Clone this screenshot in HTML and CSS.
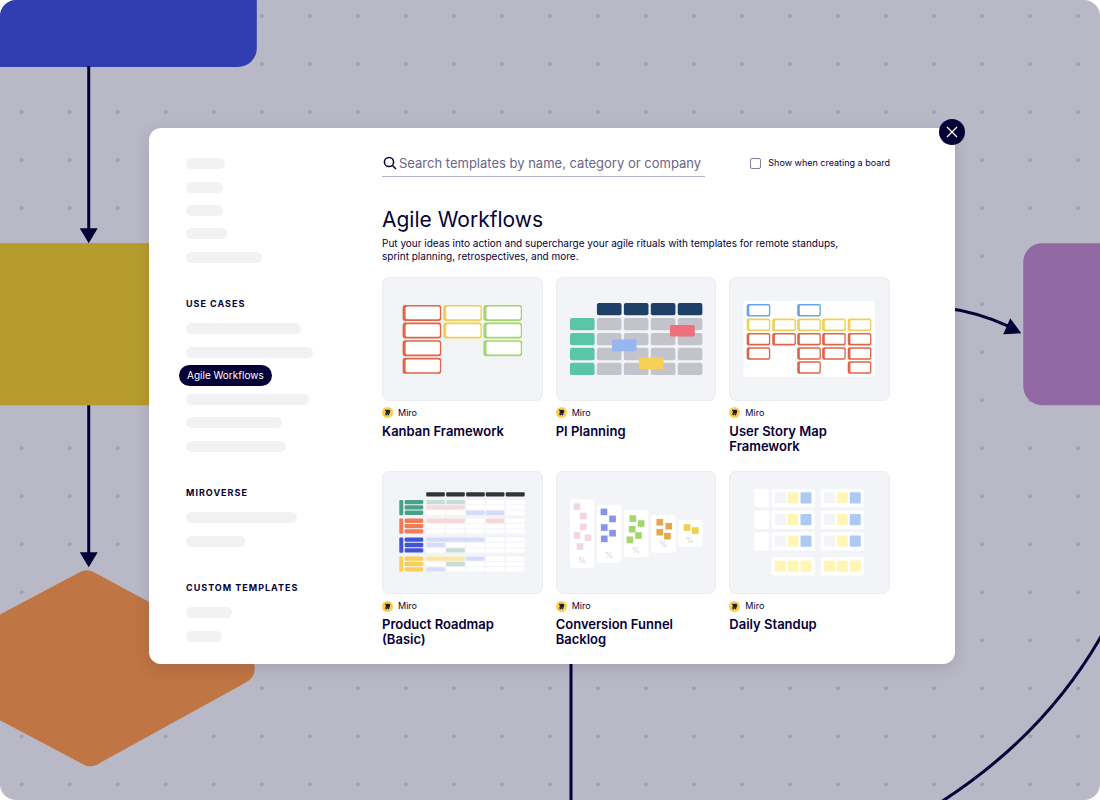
FILE: index.html
```html
<!DOCTYPE html>
<html lang="en">
<head>
<meta charset="utf-8">
<meta name="viewport" content="width=device-width, initial-scale=1">
<title>Template picker</title>
<link rel="stylesheet" href="styles.css">
</head>
<body>
<div class="board">
  <svg class="canvas" viewBox="0 0 1100 800" preserveAspectRatio="xMidYMid slice" aria-hidden="true">
    <defs>
      <pattern id="dots" x="-2" y="-8" width="48" height="48" patternUnits="userSpaceOnUse"><circle cx="24" cy="24" r="2" fill="#a09fae"/></pattern>
      <g id="sticky"><rect width="116" height="48" rx="8" fill="currentColor"/><rect x="9" y="5" width="103" height="38" rx="5" fill="#fff"/></g>
      <g id="story"><rect width="71" height="38" rx="6" fill="currentColor"/><rect x="8" y="5" width="59" height="28" rx="3" fill="#fff"/></g>
      <g id="cell-row"><rect width="56" height="13" rx="3"/><rect x="60" width="56" height="13" rx="3"/><rect x="120" width="56" height="13" rx="3"/><rect x="179" width="56" height="13" rx="3"/><rect x="239" width="57" height="13" rx="3"/></g>
      <g id="lane">
        <g fill="currentColor"><rect width="12" height="46" rx="3"/><rect x="16" width="56" height="13" rx="4"/><rect x="16" y="16" width="56" height="13" rx="4"/><rect x="16" y="32" width="56" height="13" rx="4"/></g>
        <g fill="#fff"><use href="#cell-row" x="81"/><use href="#cell-row" x="81" y="16"/><use href="#cell-row" x="81" y="32"/></g>
      </g>
      <g id="plan-row"><rect width="74" height="37" rx="6"/><rect x="81" width="74" height="37" rx="6"/><rect x="162" width="74" height="37" rx="6"/><rect x="243" width="74" height="37" rx="6"/></g>
      <rect id="note" width="20" height="20"/>
      <g id="day"><rect width="130" height="55" rx="4" fill="#fff"/><rect x="10" y="10" width="33" height="33" rx="3" fill="#f3f4f7"/><rect x="48" y="10" width="33" height="33" rx="3" fill="#fff6b5"/><rect x="87" y="10" width="33" height="34" rx="3" fill="#adcaf2"/></g>
      <g id="ideas"><rect width="130" height="55" rx="4" fill="#fff"/><g fill="#fff6b5"><rect x="10" y="10" width="33" height="34" rx="3"/><rect x="48" y="10" width="33" height="34" rx="3"/><rect x="87" y="10" width="33" height="34" rx="3"/></g></g>
      <symbol id="miro" viewBox="0 0 33 33"><circle cx="16.500" cy="16.500" r="16.500" fill="#fbd04b"/><path d="M8 8h4l2 3-1-3h4l2 3-1-3h4l3 4-4 13h-4l3-10-5 10h-4l3-9-5 9H8l4-11z" fill="#171334"/></symbol>
    </defs>
    <rect width="1100" height="800" fill="url(#dots)"/>
    <rect x="-40" y="-40" width="297" height="107" rx="19" fill="#313eb1"/>
    <rect x="-20" y="243" width="240" height="162" fill="#b69c2d"/>
    <rect x="1023" y="243" width="120" height="162" rx="19" fill="#9068a2"/>
    <path d="M-5 617 78 573Q87 567 96 573L243 652Q255 658 255 668 255 677 246 682L101 762Q91 769 82 763L-5 717Z" fill="#bf7544"/>
    <g fill="none" stroke="#050038" stroke-width="3">
      <path d="M89 66V230M89 405V555M571 640V800M940 802C1010 757 1065 700 1103 632M940 307C965 310 985 315 1008 326"/>
    </g>
    <path d="M80 228H98L89 243ZM80 552H98L89 567ZM1010 318 1021 333 1003 334Z" fill="#050038"/>
  </svg>

  <section class="dialog" role="dialog" aria-label="Templates">
    <button class="close" type="button" aria-label="Close"><svg viewBox="0 0 26 26" aria-hidden="true"><path d="M8 8 18 18M18 8 8 18"/></svg></button>

    <nav class="sidebar" aria-label="Template categories">
      <ul class="links links-5">
        <li><span class="bar w39"></span></li><li><span class="bar w37"></span></li><li><span class="bar w37"></span></li><li><span class="bar w41"></span></li><li><span class="bar w76"></span></li>
      </ul>
      <h2 class="group">USE CASES</h2>
      <ul class="links links-6">
        <li><span class="bar w115"></span></li><li><span class="bar w127"></span></li><li><a class="pill" href="#agile">Agile Workflows</a></li><li><span class="bar w123"></span></li><li><span class="bar w96"></span></li><li><span class="bar w100"></span></li>
      </ul>
      <h2 class="group">MIROVERSE</h2>
      <ul class="links links-2">
        <li><span class="bar w111"></span></li><li><span class="bar w59"></span></li>
      </ul>
      <h2 class="group">CUSTOM TEMPLATES</h2>
      <ul class="links links-2">
        <li><span class="bar w46"></span></li><li><span class="bar w36"></span></li>
      </ul>
    </nav>

    <main class="content" id="agile">
      <div class="tools">
        <label class="search">
          <svg viewBox="0 0 14 14" aria-hidden="true"><circle cx="6" cy="6" r="4.600"/><path d="m9.500 9.500 3.500 3.500"/></svg>
          <input type="text" aria-label="Search templates" placeholder="Search templates by name, category or company">
        </label>
        <label class="option"><input type="checkbox">Show when creating a board</label>
      </div>
      <h1 class="title">Agile Workflows</h1>
      <p class="intro">Put your ideas into action and supercharge your agile rituals with templates for remote standups, sprint planning, retrospectives, and more.</p>

      <div class="grid">
        <article class="card">
          <svg class="thumb" viewBox="21 21 483 372" aria-hidden="true">
            <g color="#e06446"><use href="#sticky" x="83" y="105"/><use href="#sticky" x="83" y="158"/><use href="#sticky" x="83" y="211"/><use href="#sticky" x="83" y="264"/></g>
            <g color="#f3ce58"><use href="#sticky" x="205" y="105"/><use href="#sticky" x="205" y="158"/></g>
            <g color="#a3d66c"><use href="#sticky" x="326" y="105"/><use href="#sticky" x="326" y="158"/><use href="#sticky" x="326" y="211"/></g>
          </svg>
          <p class="author"><svg aria-hidden="true"><use href="#miro"/></svg>Miro</p>
          <h3 class="name">Kanban Framework</h3>
        </article>
        <article class="card">
          <svg class="thumb" viewBox="18 21 483 372" aria-hidden="true">
            <use href="#plan-row" x="141" y="99" fill="#1e3f66"/>
            <g fill="#c3c3cc"><use href="#plan-row" x="141" y="144"/><use href="#plan-row" x="141" y="189"/><use href="#plan-row" x="141" y="234"/><use href="#plan-row" x="141" y="279"/></g>
            <g fill="#5bc5a7"><rect x="60" y="144" width="74" height="37" rx="6"/><rect x="60" y="189" width="74" height="37" rx="6"/><rect x="60" y="234" width="74" height="37" rx="6"/><rect x="60" y="279" width="74" height="37" rx="6"/></g>
            <rect x="361" y="165" width="74" height="35" rx="4" fill="#ee6e79"/><rect x="186" y="209" width="74" height="35" rx="4" fill="#97b5ee"/><rect x="267" y="263" width="74" height="35" rx="4" fill="#f9d057"/>
          </svg>
          <p class="author"><svg aria-hidden="true"><use href="#miro"/></svg>Miro</p>
          <h3 class="name">PI Planning</h3>
        </article>
        <article class="card">
          <svg class="thumb" viewBox="22 21 483 372" aria-hidden="true">
            <rect x="65" y="93" width="396" height="228" rx="6" fill="#fff"/>
            <g color="#66a5ea"><use href="#story" x="75" y="102"/><use href="#story" x="227" y="102"/></g>
            <g color="#f1cf58"><use href="#story" x="75" y="146"/><use href="#story" x="152" y="146"/><use href="#story" x="227" y="146"/><use href="#story" x="302" y="146"/><use href="#story" x="379" y="146"/></g>
            <g color="#e06446"><use href="#story" x="75" y="189"/><use href="#story" x="152" y="189"/><use href="#story" x="227" y="189"/><use href="#story" x="302" y="189"/><use href="#story" x="379" y="189"/><use href="#story" x="75" y="232"/><use href="#story" x="227" y="232"/><use href="#story" x="302" y="232"/><use href="#story" x="379" y="232"/><use href="#story" x="227" y="274"/><use href="#story" x="379" y="274"/></g>
          </svg>
          <p class="author"><svg aria-hidden="true"><use href="#miro"/></svg>Miro</p>
          <h3 class="name">User Story Map Framework</h3>
        </article>
        <article class="card">
          <svg class="thumb" viewBox="21 24 483 372" aria-hidden="true">
            <use href="#cell-row" x="154" y="88" fill="#333336"/>
            <use href="#lane" x="73" y="111" color="#49a187"/><use href="#lane" x="73" y="167" color="#ef7b59"/><use href="#lane" x="73" y="224" color="#4353d5"/><use href="#lane" x="73" y="281" color="#f9d057"/>
            <g fill="#c9ddd7"><rect x="154" y="111" width="56" height="13" rx="3"/><rect x="214" y="111" width="56" height="13" rx="3"/><rect x="214" y="256" width="56" height="13" rx="3"/><rect x="214" y="297" width="56" height="13" rx="3"/></g>
            <g fill="#f4d8da"><rect x="154" y="127" width="116" height="13" rx="3"/><rect x="154" y="167" width="116" height="13" rx="3"/><rect x="333" y="167" width="56" height="13" rx="3"/></g>
            <g fill="#d5dbfa"><rect x="274" y="143" width="56" height="13" rx="3"/><rect x="333" y="143" width="56" height="13" rx="3"/><rect x="154" y="224" width="176" height="13" rx="3"/><rect x="154" y="240" width="56" height="13" rx="3"/><rect x="274" y="281" width="56" height="13" rx="3"/><rect x="154" y="313" width="56" height="13" rx="3"/></g>
            <rect x="154" y="281" width="116" height="13" rx="3" fill="#f8e6a4"/>
          </svg>
          <p class="author"><svg aria-hidden="true"><use href="#miro"/></svg>Miro</p>
          <h3 class="name">Product Roadmap (Basic)</h3>
        </article>
        <article class="card">
          <svg class="thumb" viewBox="18 24 483 372" aria-hidden="true">
            <g fill="#fff"><rect x="60" y="110" width="73" height="205" rx="9"/><rect x="141" y="126" width="74" height="174" rx="9"/><rect x="222" y="141" width="74" height="142" rx="9"/><rect x="304" y="156" width="74" height="114" rx="9"/><rect x="384" y="171" width="75" height="81" rx="9"/></g>
            <g fill="#f3d6df"><use href="#note" x="71" y="121"/><use href="#note" x="90" y="149"/><use href="#note" x="90" y="182"/><use href="#note" x="71" y="208"/><use href="#note" x="104" y="215"/><use href="#note" x="80" y="241"/></g>
            <g fill="#8694ee"><use href="#note" x="152" y="137"/><use href="#note" x="178" y="158"/><use href="#note" x="153" y="184"/><use href="#note" x="178" y="201"/><use href="#note" x="153" y="218"/></g>
            <g fill="#a3d66c"><use href="#note" x="239" y="157"/><use href="#note" x="264" y="172"/><use href="#note" x="237" y="189"/><use href="#note" x="256" y="208"/><use href="#note" x="230" y="221"/></g>
            <g fill="#e6a84a"><use href="#note" x="320" y="168"/><use href="#note" x="347" y="180"/><use href="#note" x="320" y="198"/><use href="#note" x="343" y="210"/></g>
            <g fill="#f0d14d"><use href="#note" x="402" y="184"/><use href="#note" x="427" y="193"/></g>
            <g class="percent"><text x="96" y="300">%</text><text x="178" y="286">%</text><text x="258" y="270">%</text><text x="340" y="253">%</text><text x="420" y="239">%</text></g>
          </svg>
          <p class="author"><svg aria-hidden="true"><use href="#miro"/></svg>Miro</p>
          <h3 class="name">Conversion Funnel Backlog</h3>
        </article>
        <article class="card">
          <svg class="thumb" viewBox="22 24 483 372" aria-hidden="true">
            <g fill="#fff"><rect x="98" y="78" width="44" height="55" rx="4"/><rect x="98" y="143" width="44" height="55" rx="4"/><rect x="98" y="208" width="44" height="55" rx="4"/></g>
            <use href="#day" x="150" y="78"/><use href="#day" x="298" y="78"/><use href="#day" x="150" y="143"/><use href="#day" x="298" y="143"/><use href="#day" x="150" y="208"/><use href="#day" x="298" y="208"/>
            <use href="#ideas" x="150" y="283"/><use href="#ideas" x="298" y="283"/>
          </svg>
          <p class="author"><svg aria-hidden="true"><use href="#miro"/></svg>Miro</p>
          <h3 class="name">Daily Standup</h3>
        </article>
      </div>
    </main>
  </section>
</div>
</body>
</html>
```

FILE: styles.css
```css
* { box-sizing: border-box; }
body { margin: 0; background: #fff; color: #050038; font-family: Inter, "Liberation Sans", sans-serif; }
h1, h2, h3, p, ul { margin: 0; padding: 0; }
ul { list-style: none; }

.board { position: relative; min-height: 100vh; padding: 128px 145px 136px 149px; border-radius: 16px; background: #b9b8c6; overflow: hidden; }
.canvas { position: absolute; inset: 0; width: 100%; height: 100%; }

.dialog { position: relative; display: flex; border-radius: 12px; background: #fff; box-shadow: 0 4px 16px rgba(5, 0, 56, .12); }
.close { position: absolute; top: -9px; right: -10px; width: 26px; height: 26px; padding: 0; border: 0; border-radius: 50%; background: #050038; cursor: pointer; }
.close svg { display: block; fill: none; stroke: #fff; stroke-width: 1.3; }

.sidebar { flex: 0 0 233px; padding: 24px 20px 14px 37px; }
.links { display: flex; flex-direction: column; }
.links li { flex: 1; display: flex; align-items: center; }
.links-5 { height: 117px; }
.links-6 { height: 141px; }
.links-2 { height: 47px; }
.group { margin: 29px 0 7px; font-size: 9px; line-height: 12px; font-weight: 700; letter-spacing: 1px; }
.bar { height: 11px; border-radius: 6px; background: #f2f2f5; }
.w36 { width: 36px; } .w37 { width: 37px; } .w39 { width: 39px; } .w41 { width: 41px; } .w46 { width: 46px; }
.w59 { width: 59px; } .w76 { width: 76px; } .w96 { width: 96px; } .w100 { width: 100px; } .w111 { width: 111px; }
.w115 { width: 115px; } .w123 { width: 123px; } .w127 { width: 127px; }
.pill { margin-left: -7px; padding: 0 8px; border-radius: 11px; background: #050038; color: #fff; font-size: 10px; line-height: 21px; text-decoration: none; white-space: nowrap; }

.content { flex: 1; min-width: 0; padding: 21px 65px 17px 0; }
.tools { display: flex; align-items: center; justify-content: space-between; gap: 20px; }
.search { display: flex; flex: 0 1 323px; align-items: center; gap: 2px; height: 28px; border-bottom: 1px solid #b4b2c5; }
.search svg { flex: none; width: 14px; height: 14px; margin-left: 1px; fill: none; stroke: #050038; stroke-width: 1.5; }
.search input { flex: 1; min-width: 0; padding: 0; border: 0; outline: 0; background: none; color: #050038; font: 13px/20px Inter, sans-serif; }
.search input::placeholder { color: #69668a; opacity: 1; }
.option { display: flex; align-items: center; gap: 7px; font-size: 9px; line-height: 12px; white-space: nowrap; }
.option input { appearance: none; width: 11px; height: 11px; margin: 0; border: 1px solid #8280a0; border-radius: 2px; }
.option input:checked { background: #050038; }
.title { margin-top: 29px; font-size: 21px; line-height: 28px; font-weight: 400; }
.intro { margin-top: 3px; padding-right: 24px; font-size: 10px; line-height: 13px; }

.grid { display: grid; grid-template-columns: repeat(3, minmax(0, 1fr)); gap: 17px 13px; margin-top: 14px; }
.thumb { display: block; width: 100%; border-radius: 8px; background: #f3f4f7; box-shadow: 0 0 0 1px #ebebf0 inset; }
.percent { fill: #d3d3dd; font-size: 24px; text-anchor: middle; }
.author { display: flex; align-items: center; gap: 5px; margin-top: 6px; font-size: 9px; line-height: 12px; }
.author svg { width: 11px; height: 11px; }
.name { margin-top: 5px; padding-right: 20px; font-size: 13px; line-height: 15px; font-weight: 600; }
```
